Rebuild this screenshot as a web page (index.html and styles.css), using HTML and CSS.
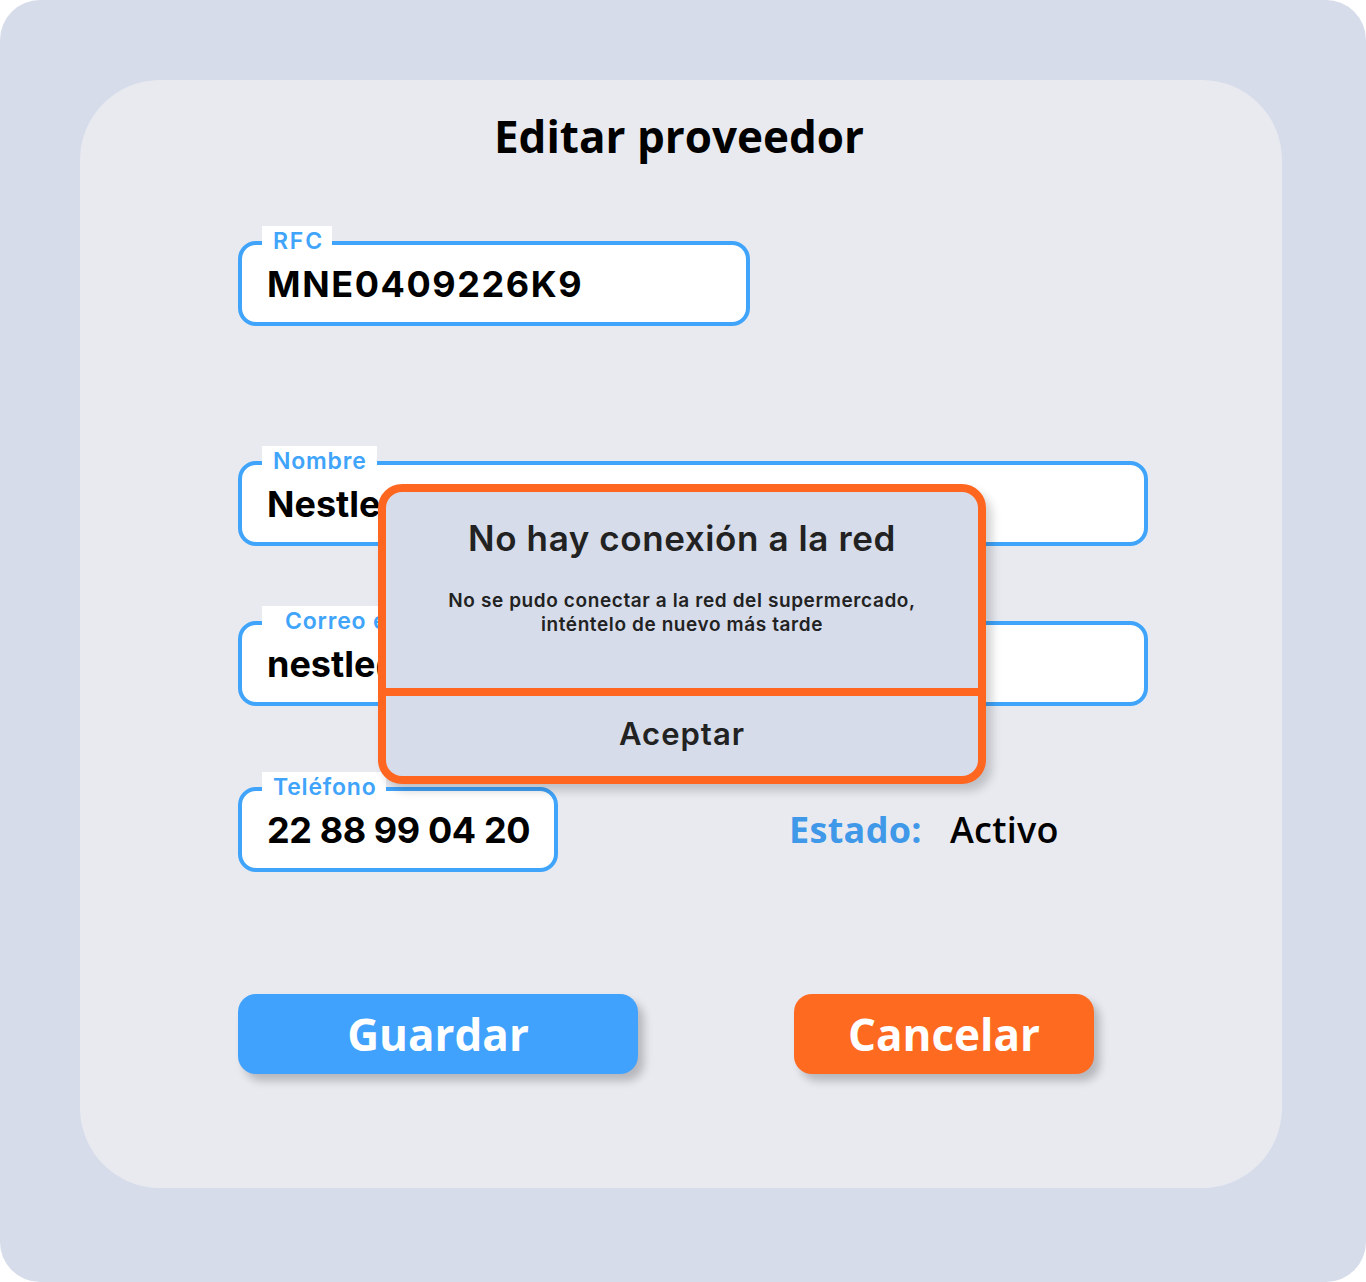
FILE: index.html
```html
<!DOCTYPE html>
<html lang="es">
<head>
<meta charset="utf-8">
<title>Editar proveedor</title>
<link rel="stylesheet" href="styles.css">
</head>
<body>
<div class="frame">
  <div class="card">
    <h1 class="title">Editar proveedor</h1>
    <div class="form">
      <div class="field field-rfc">
        <span class="label label-rfc">RFC</span>
        <span class="value value-rfc">MNE0409226K9</span>
      </div>
      <div class="field field-wide field-nombre">
        <span class="label">Nombre</span>
        <span class="value">Nestle</span>
      </div>
      <div class="field field-wide field-correo">
        <span class="label label-correo">Correo electrónico</span>
        <span class="value">nestle@nestle.com</span>
      </div>
      <div class="row">
        <div class="field field-tel">
          <span class="label">Teléfono</span>
          <span class="value value-tel">22 88 99 04 20</span>
        </div>
        <div class="estado">
          <span class="estado-key">Estado:</span>
          <span class="estado-val">Activo</span>
        </div>
      </div>
      <div class="buttons">
        <button class="btn btn-save">Guardar</button>
        <button class="btn btn-cancel">Cancelar</button>
      </div>
    </div>
    <div class="dialog">
      <div class="dialog-body">
        <h2 class="dialog-title">No hay conexión a la red</h2>
        <p class="dialog-msg">No se pudo conectar a la red del supermercado,<br>inténtelo de nuevo más tarde</p>
      </div>
      <div class="dialog-action">Aceptar</div>
    </div>
  </div>
</div>
</body>
</html>
```

FILE: styles.css
```css
* { box-sizing: border-box; }
html, body { margin: 0; padding: 0; background: #ffffff; }
body { width: 1366px; height: 1282px; overflow: hidden; }

.frame {
  width: 1366px;
  height: 1282px;
  background: #d6dcea;
  border-radius: 40px;
  padding: 80px 84px 94px 80px;
}

.card {
  position: relative;
  width: 1202px;
  height: 1108px;
  background: #e9eaf0;
  border-radius: 80px;
  padding: 28px 0 0 158px;
}

.title {
  margin: 0 0 0 -158px;
  height: 56px;
  line-height: 56px;
  text-align: center;
  font-family: "Open Sans", "Liberation Sans", sans-serif;
  font-weight: 700;
  font-size: 44px;
  color: #000;
  padding-right: 4px;
}

.form {
  display: flex;
  flex-direction: column;
  align-items: flex-start;
  padding-top: 77px;
}

.field {
  position: relative;
  height: 85px;
  border: 4px solid #40a4fb;
  border-radius: 18px;
  background: #fff;
  padding-left: 25px;
  display: flex;
  align-items: center;
  font-family: "Inter", "Liberation Sans", sans-serif;
  overflow: visible;
}
.field-rfc { width: 512px; }
.field-wide { width: 910px; }
.field-nombre { margin-top: 135px; }
.field-correo { margin-top: 75px; }
.field-tel { width: 320px; }

.value {
  font-size: 36px;
  font-weight: 700;
  color: #000;
  letter-spacing: 0;
  white-space: nowrap;
}
.value-rfc { letter-spacing: 1.6px; }
.value-tel { letter-spacing: -0.4px; }

.label {
  position: absolute;
  left: 20px;
  top: -19px;
  height: 31px;
  line-height: 31px;
  padding: 0 10px 0 11px;
  background: #fff;
  color: #40a4fb;
  font-size: 23px;
  font-weight: 600;
  letter-spacing: 0.8px;
  white-space: nowrap;
}
.label-rfc { letter-spacing: 1.8px; padding-right: 8px; }
.label-correo { padding-left: 23px; }

.row {
  margin-top: 81px;
  display: flex;
  align-items: center;
  gap: 231px;
}

.estado {
  display: flex;
  align-items: baseline;
  gap: 28px;
  font-family: "Open Sans", "Liberation Sans", sans-serif;
  font-size: 36px;
}
.estado-key { color: #3f98e8; font-weight: 700; letter-spacing: 0.3px; }
.estado-val { color: #000; font-weight: 600; letter-spacing: 0.3px; }

.buttons {
  margin-top: 122px;
  display: flex;
  gap: 156px;
}

.btn {
  height: 80px;
  border: none;
  border-radius: 18px;
  color: #fff;
  font-family: "Open Sans", "Liberation Sans", sans-serif;
  font-weight: 700;
  font-size: 44px;
  box-shadow: 6px 7px 8px rgba(0, 0, 0, 0.22);
  padding: 0;
}
.btn-save { width: 400px; background: #40a2fd; }
.btn-cancel { width: 300px; background: #ff6a21; }

.dialog {
  position: absolute;
  left: 298px;
  top: 404px;
  width: 608px;
  height: 300px;
  border: 8px solid #ff6721;
  border-radius: 24px;
  background: #d6dcea;
  box-shadow: 6px 7px 10px rgba(0, 0, 0, 0.18);
  display: flex;
  flex-direction: column;
  font-family: "Inter", "Liberation Sans", sans-serif;
  color: #222;
  text-align: center;
}

.dialog-body {
  height: 204px;
  flex: none;
  border-bottom: 8px solid #ff6721;
  padding-top: 26px;
}

.dialog-title {
  margin: 0;
  font-size: 35px;
  font-weight: 600;
  line-height: 40px;
  letter-spacing: 0.6px;
}

.dialog-msg {
  margin: 31px 0 0;
  font-size: 19px;
  font-weight: 600;
  line-height: 24px;
  letter-spacing: 0.6px;
}

.dialog-action {
  flex: 1;
  display: flex;
  align-items: center;
  justify-content: center;
  padding-bottom: 5px;
  font-size: 31px;
  font-weight: 600;
  letter-spacing: 1px;
}
```
